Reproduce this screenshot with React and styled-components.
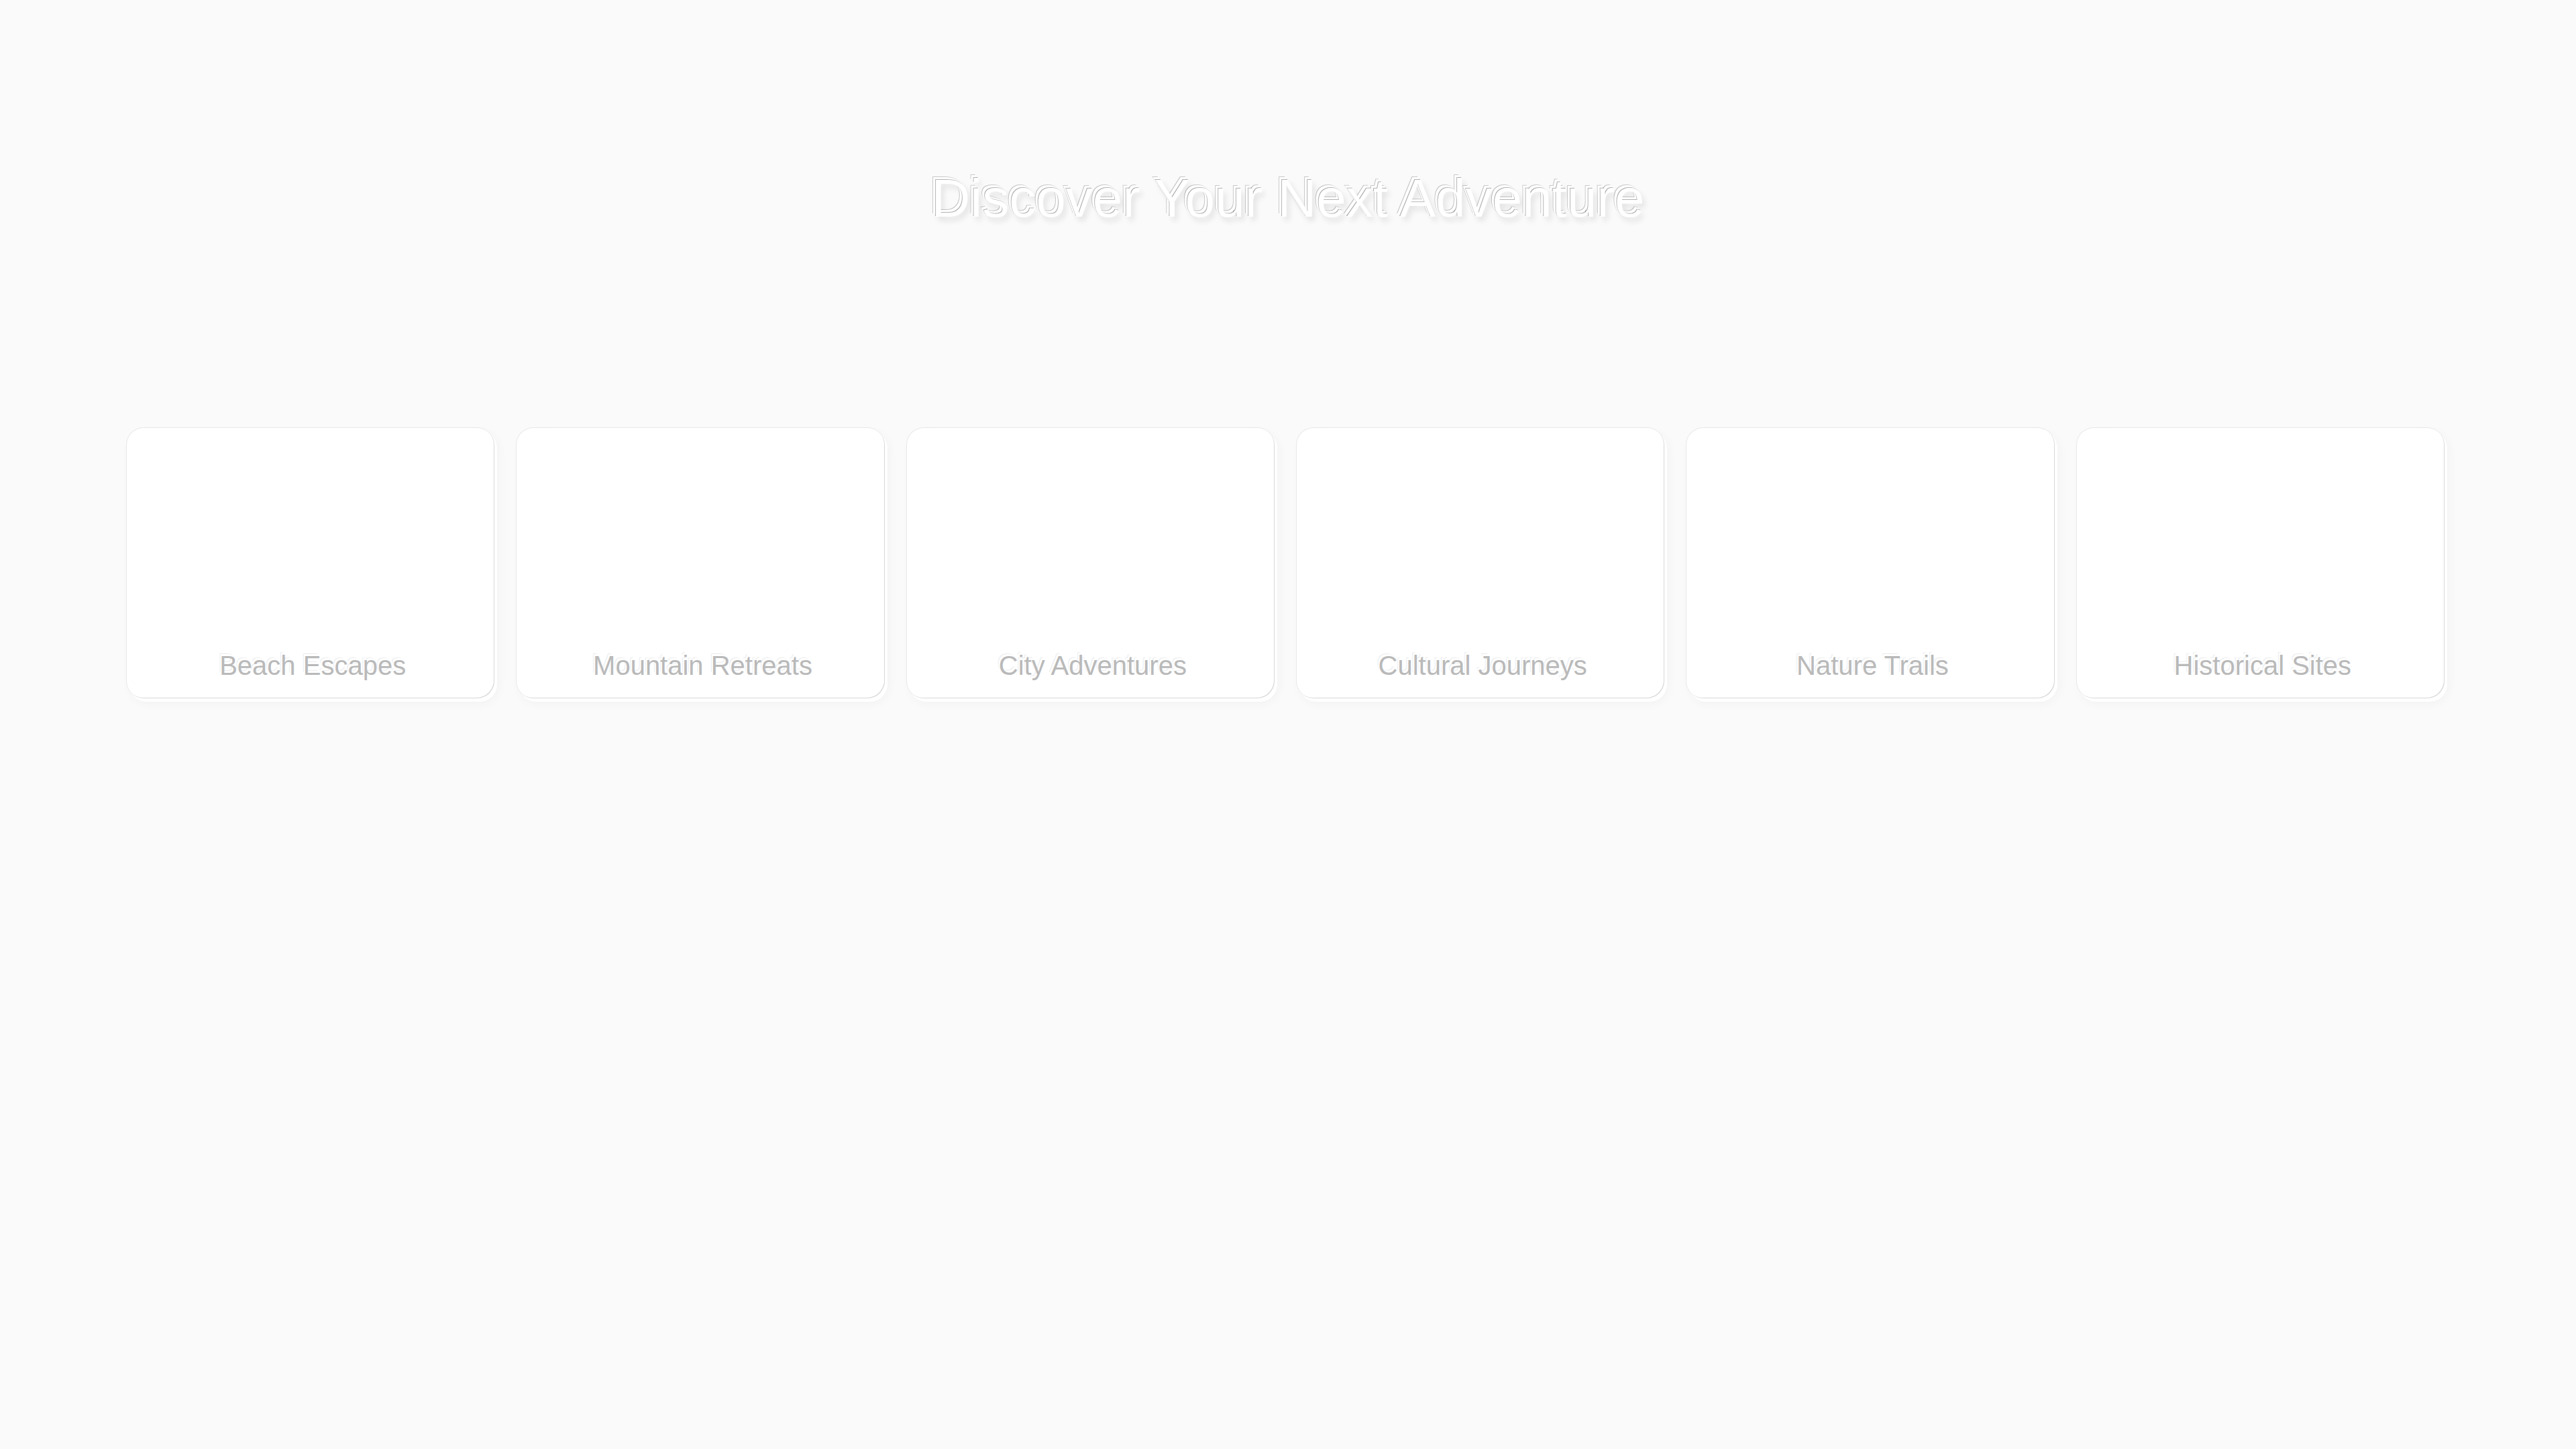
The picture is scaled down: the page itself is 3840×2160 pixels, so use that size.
import styled, { createGlobalStyle } from "styled-components";

const destinations = [
  "Beach Escapes",
  "Mountain Retreats",
  "City Adventures",
  "Cultural Journeys",
  "Nature Trails",
  "Historical Sites",
];

function App() {
  return (
    <>
      <GlobalStyle />
      <Page>
        <Title>Discover Your Next Adventure</Title>
        <CardRow>
          {destinations.map((name) => (
            <Card key={name}>
              <Label>{name}</Label>
            </Card>
          ))}
        </CardRow>
      </Page>
    </>
  );
}

export default App;

const GlobalStyle = createGlobalStyle`
  body {
    margin: 0;
    background: #fafafa;
    font-family: "Liberation Sans", Arial, sans-serif;
  }
`;

const Page = styled.div`
  min-height: 100vh;
  padding-top: 250px;
  box-sizing: border-box;
`;

const Title = styled.h1`
  margin: 0;
  text-align: center;
  font-size: 80px;
  font-weight: 400;
  line-height: 92px;
  color: #ffffff;
  text-shadow: -1px -1px 0 rgba(0, 0, 0, 0.3), -4px -4px 0 #ffffff,
    -5px -5px 0 rgba(0, 0, 0, 0.2), 4px 6px 8px rgba(0, 0, 0, 0.1);
`;

const CardRow = styled.div`
  display: grid;
  grid-template-columns: repeat(6, 1fr);
  gap: 32px;
  padding: 0 196px 0 188px;
  margin-top: 295px;
`;

const Card = styled.div`
  height: 404px;
  background: #ffffff;
  border-radius: 26px;
  border-top: 1px solid #e8e8e8;
  border-left: 1px solid #e8e8e8;
  box-shadow: inset -1px -1px 0 #d8d8d8, 4px 5px 0 #ffffff,
    6px 8px 16px rgba(0, 0, 0, 0.035);
  display: flex;
  align-items: flex-end;
  justify-content: center;
  padding: 0 0 26px 6px;
  box-sizing: border-box;
`;

const Label = styled.span`
  font-size: 40px;
  line-height: 46px;
  color: #b9b9b9;
  text-shadow: -2px -3px 0 #ffffff, -3px -4px 1px rgba(0, 0, 0, 0.08);
`;
